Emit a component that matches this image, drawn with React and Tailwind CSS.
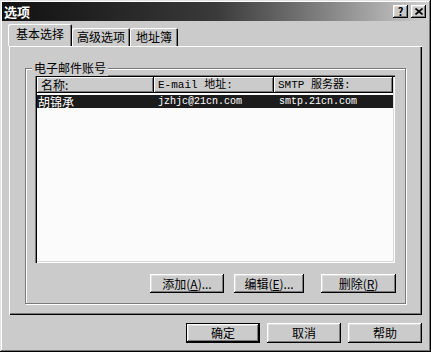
import React from 'react';

const raised =
  'bg-[#cbcbcb] shadow-[inset_-1px_-1px_#000,inset_1px_1px_#fff,inset_-2px_-2px_#7a7a7a,inset_2px_2px_#dedede]';

const Btn = ({ className = '', children }) => (
  <div className={`${raised} h-[19px] flex items-center justify-center text-[12px] text-black ${className}`}>
    {children}
  </div>
);

const HeaderCell = ({ className = '', children }) => (
  <div
    className={`h-[16px] flex items-center pl-[4px] bg-[#cbcbcb] shadow-[inset_-1px_-1px_#000,inset_1px_1px_#fff,inset_-2px_-2px_#7a7a7a] ${className}`}
  >
    {children}
  </div>
);

export default function App() {
  return (
    <div className="w-[431px] h-[352px] bg-[#cbcbcb] p-[2px] shadow-[inset_-1px_-1px_#000,inset_1px_1px_#e2e2e2,inset_-2px_-2px_#777,inset_2px_2px_#fff] font-['Noto_Sans_CJK_SC',sans-serif] text-black overflow-hidden">
      {/* title bar */}
      <div className="h-[19px] flex items-center justify-between pl-[2px] pr-[3px] bg-gradient-to-r from-[#111] via-[#3a3a3a] to-[#d0d0d0]">
        <span className="text-white font-bold text-[13px] leading-none">选项</span>
        <div className="flex gap-[3px]">
          <div className={`${raised} w-[15px] h-[13px] flex items-center justify-center text-[11px] font-bold leading-none`}>?</div>
          <div className={`${raised} w-[15px] h-[13px] flex items-center justify-center`}>
            <svg width="8" height="7" viewBox="0 0 8 7">
              <path d="M0.5 0.5 L7.5 6.5 M7.5 0.5 L0.5 6.5" stroke="#000" strokeWidth="1.6" />
            </svg>
          </div>
        </div>
      </div>

      {/* tabs */}
      <div className="flex items-end h-[22px] mt-[3px] ml-[6px]">
        <div className="relative z-10 h-[22px] w-[64px] bg-[#cbcbcb] flex items-center justify-center text-[12px] pb-[2px] rounded-t-[2px] shadow-[inset_1px_1px_#fff,inset_-1px_0_#000,inset_-2px_0_#7a7a7a]">
          基本选择
        </div>
        <div className="h-[18px] w-[58px] flex items-center justify-center text-[12px] rounded-t-[2px] shadow-[inset_1px_1px_#fff,inset_-1px_0_#000,inset_-2px_0_#7a7a7a]">
          高级选项
        </div>
        <div className="h-[18px] w-[48px] flex items-center justify-center text-[12px] rounded-t-[2px] shadow-[inset_1px_1px_#fff,inset_-1px_0_#000,inset_-2px_0_#7a7a7a]">
          地址簿
        </div>
      </div>

      {/* tab panel */}
      <div className="ml-[7px] w-[413px] h-[269px] pt-[22px] pl-[16px] shadow-[inset_1px_1px_#fff,inset_-1px_-1px_#000,inset_-2px_-2px_#7a7a7a]">
        <div className="relative w-[381px] h-[236px] border border-[#7a7a7a] shadow-[inset_1px_1px_#fff,1px_1px_#fff] pt-[6px] pl-[9px]">
          <span className="absolute -top-[9px] left-[6px] px-[2px] bg-[#cbcbcb] text-[12px] leading-[16px]">电子邮件账号</span>

          {/* list */}
          <div className="w-[360px] h-[188px] bg-[#fbfbfb] p-[2px] shadow-[inset_1px_1px_#7a7a7a,inset_2px_2px_#000,inset_-1px_-1px_#fff,inset_-2px_-2px_#d8d8d8]">
            <div className="flex text-[11px] font-['Liberation_Mono','Noto_Sans_CJK_SC',monospace]">
              <HeaderCell className="w-[117px] font-['Noto_Sans_CJK_SC',sans-serif] text-[12px]">名称:</HeaderCell>
              <HeaderCell className="w-[120px]">E-mail 地址:</HeaderCell>
              <HeaderCell className="w-[119px]">SMTP 服务器:</HeaderCell>
            </div>
            <div className="mt-[2px] h-[13px] bg-[#1c1c1c] text-white flex items-center text-[10px] font-['Liberation_Mono',monospace]">
              <span className="w-[121px] pl-[1px] text-[12px] font-['Noto_Sans_CJK_SC',sans-serif] leading-none">胡锦承</span>
              <span className="w-[121px]">jzhjc@21cn.com</span>
              <span>smtp.21cn.com</span>
            </div>
          </div>

          {/* buttons */}
          <div className="flex mt-[11px] ml-[115px]">
            <Btn className="w-[74px]">
              添加(<span className="underline">A</span>)...
            </Btn>
            <Btn className="w-[70px] ml-[10px]">
              编辑(<span className="underline">E</span>)...
            </Btn>
            <Btn className="w-[75px] ml-[17px]">
              删除(<span className="underline">R</span>)
            </Btn>
          </div>
        </div>
      </div>

      {/* dialog buttons */}
      <div className="flex justify-end gap-[7px] mt-[8px] mr-[7px]">
        <div className="w-[74px] h-[20px] border border-black">
          <Btn className="w-full h-full">确定</Btn>
        </div>
        <Btn className="w-[74px] h-[20px]">取消</Btn>
        <Btn className="w-[74px] h-[20px]">帮助</Btn>
      </div>
    </div>
  );
}
